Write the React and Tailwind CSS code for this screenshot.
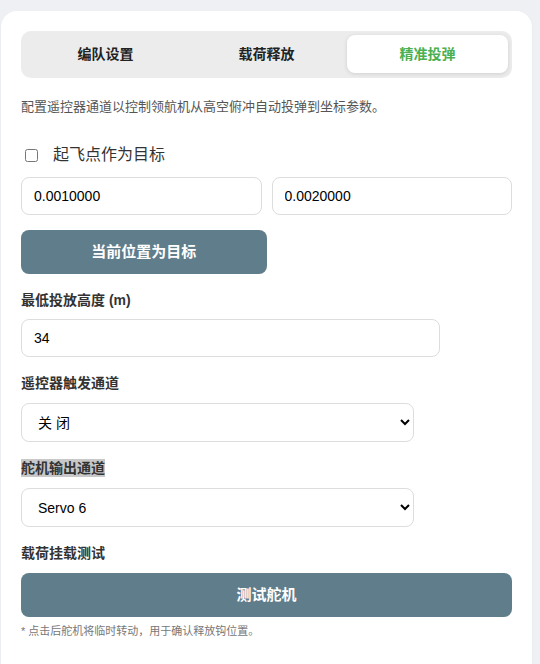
import React, { useState } from "react";

const tabs = ["编队设置", "载荷释放", "精准投弹"];

export default function App() {
  const [active, setActive] = useState(2);
  const [useHome, setUseHome] = useState(false);

  return (
    <div
      className="min-h-[664px] bg-[#eef0f3] pl-px pt-[11px]"
      style={{ fontFamily: '"Liberation Sans", "Noto Sans CJK SC", sans-serif' }}
    >
      <div className="w-[531px] rounded-2xl bg-white px-5 pt-5 pb-12 shadow-[0_1px_3px_rgba(0,0,0,0.04)]">
        <div className="flex h-[47px] rounded-[10px] bg-[#ececec] p-1">
          {tabs.map((t, i) => (
            <button
              key={t}
              onClick={() => setActive(i)}
              className={
                i === active
                  ? "h-[38px] flex-1 rounded-lg bg-white text-sm font-bold text-[#4caf50] shadow-[0_1px_4px_rgba(0,0,0,0.12)]"
                  : "h-[38px] flex-1 rounded-lg text-sm font-bold text-[#222]"
              }
            >
              {t}
            </button>
          ))}
        </div>

        <p className="mt-[19px] text-[13px] leading-5 text-[#555]">
          配置遥控器通道以控制领航机从高空俯冲自动投弹到坐标参数。
        </p>

        <label className="mt-[26px] flex h-6 items-center">
          <input
            type="checkbox"
            className="ml-1 h-[13px] w-[13px]"
            checked={useHome}
            onChange={e => setUseHome(e.target.checked)}
          />
          <span className="ml-[15px] text-base text-[#333]">起飞点作为目标</span>
        </label>

        <div className="mt-[10px] flex gap-[10px]">
          <input
            type="text"
            defaultValue="0.0010000"
            className="h-[38px] flex-1 rounded-lg border border-[#ddd] px-3 text-sm text-black"
          />
          <input
            type="text"
            defaultValue="0.0020000"
            className="h-[38px] flex-1 rounded-lg border border-[#ddd] px-3 text-sm text-black"
          />
        </div>

        <button className="mt-[15px] h-11 w-1/2 rounded-lg bg-[#607d8b] text-[15px] font-bold text-white">
          当前位置为目标
        </button>

        <div className="mt-4 text-sm leading-5 font-bold text-[#333]">最低投放高度 (m)</div>
        <input
          type="number"
          defaultValue="34"
          className="mt-[9px] block h-[38px] w-[419px] rounded-lg border border-[#ddd] px-3 text-sm text-black"
        />

        <div className="mt-4 text-sm leading-5 font-bold text-[#333]">遥控器触发通道</div>
        <select className="mt-[10px] block h-[39px] w-[393px] rounded-lg border border-[#ddd] px-3 text-sm text-black">
          <option>关 闭</option>
          <option>CH 7</option>
          <option>CH 8</option>
        </select>

        <div className="mt-4 text-sm leading-5 font-bold text-[#333]">
          <span className="bg-[#c8c8c8] py-px">舵机输出通道</span>
        </div>
        <select
          defaultValue="Servo 6"
          className="mt-[10px] block h-[39px] w-[393px] rounded-lg border border-[#ddd] px-3 text-sm text-black"
        >
          <option>Servo 5</option>
          <option>Servo 6</option>
          <option>Servo 7</option>
        </select>

        <div className="mt-4 text-sm leading-5 font-bold text-[#333]">载荷挂载测试</div>
        <button className="mt-[10px] h-11 w-full rounded-lg bg-[#607d8b] text-[15px] font-bold text-white">
          测试舵机
        </button>

        <p className="mt-[6px] text-[11px] leading-4 text-[#777]">
          * 点击后舵机将临时转动，用于确认释放钩位置。
        </p>
      </div>
    </div>
  );
}
